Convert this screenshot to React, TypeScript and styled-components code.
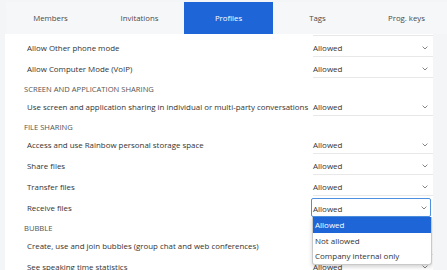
import React from "react";
import styled, { createGlobalStyle } from "styled-components";

const Global = createGlobalStyle`
  html, body {
    margin: 0;
    padding: 0;
    width: 447px;
    height: 270px;
    overflow: hidden;
    background: #f4f5f7;
    font-family: "Open Sans", "Noto Sans", sans-serif;
  }
`;

const Page = styled.div`
  display: flex;
  flex-direction: column;
  width: 447px;
  height: 270px;
  overflow: hidden;
`;

const TabBar = styled.div`
  display: flex;
  margin: 2px 0 0 6px;
  height: 32px;
  background: #f6f7f9;
  flex-shrink: 0;
`;

const Tab = styled.div<{ $active?: boolean }>`
  flex: 0 0 89px;
  display: flex;
  align-items: center;
  justify-content: center;
  font-size: 7.8px;
  color: ${(p) => (p.$active ? "#ffffff" : "#4a4a4a")};
  background: ${(p) => (p.$active ? "#1e66d8" : "transparent")};
`;

const Content = styled.div`
  margin-left: 5px;
  width: 428px;
  flex: 1;
  background: #ffffff;
  overflow: hidden;
`;

const List = styled.div`
  display: flex;
  flex-direction: column;
  margin-top: -19px;
  padding-left: 19px;
`;

const Row = styled.div`
  display: grid;
  grid-template-columns: minmax(0, 1fr) 120px;
  align-items: end;
  height: 21px;
`;

const Label = styled.div`
  padding-left: 3px;
  height: 19px;
  line-height: 20px;
  font-size: 7.9px;
  color: #333333;
  white-space: nowrap;
  overflow: hidden;
`;

const Section = styled.div`
  height: 17px;
  padding-top: 4px;
  box-sizing: border-box;
  line-height: 15px;
  font-size: 7.6px;
  color: #555555;
  text-transform: uppercase;
`;

const SelectWrap = styled.div`
  position: relative;
  height: 19px;
`;

const Select = styled.div<{ $focused?: boolean }>`
  display: flex;
  align-items: center;
  justify-content: space-between;
  height: 19px;
  box-sizing: border-box;
  font-size: 8px;
  color: #333333;
  ${(p) =>
    p.$focused
      ? `
    border: 1px solid #4d8fe0;
    border-radius: 2px;
    margin-left: -2px;
    margin-right: 2px;
    padding: 1px 3px 0 1px;
  `
      : `
    border-bottom: 1px solid #e8e8e8;
    padding: 1px 5px 0 0;
  `}
`;

const Chevron = () => (
  <svg width="6" height="4" viewBox="0 0 6 4">
    <path d="M0.6 0.6 L3 3 L5.4 0.6" fill="none" stroke="#777" strokeWidth="0.9" />
  </svg>
);

const Menu = styled.div`
  position: absolute;
  top: 19px;
  left: -1px;
  width: 118px;
  background: #ffffff;
  border: 1px solid #c9c9c9;
  border-top: none;
  border-radius: 0 0 3px 3px;
  box-shadow: 0 2px 4px rgba(0, 0, 0, 0.18);
  z-index: 2;
`;

const Option = styled.div<{ $selected?: boolean }>`
  height: 15.6px;
  line-height: 15.6px;
  padding-left: 2px;
  font-size: 8px;
  color: ${(p) => (p.$selected ? "#ffffff" : "#333333")};
  background: ${(p) => (p.$selected ? "#1e66d8" : "transparent")};
  white-space: nowrap;
`;

type Item =
  | { kind: "row"; label: string; focused?: boolean }
  | { kind: "section"; label: string };

const items: Item[] = [
  { kind: "row", label: "Allow Office phone mode" },
  { kind: "row", label: "Allow Other phone mode" },
  { kind: "row", label: "Allow Computer Mode (VoIP)" },
  { kind: "section", label: "Screen and application sharing" },
  { kind: "row", label: "Use screen and application sharing in individual or multi-party conversations" },
  { kind: "section", label: "File sharing" },
  { kind: "row", label: "Access and use Rainbow personal storage space" },
  { kind: "row", label: "Share files" },
  { kind: "row", label: "Transfer files" },
  { kind: "row", label: "Receive files", focused: true },
  { kind: "section", label: "Bubble" },
  { kind: "row", label: "Create, use and join bubbles (group chat and web conferences)" },
  { kind: "row", label: "See speaking time statistics" },
];

const tabs = ["Members", "Invitations", "Profiles", "Tags", "Prog. keys"];
const options = ["Allowed", "Not allowed", "Company internal only"];

export default function App() {
  return (
    <Page>
      <Global />
      <TabBar>
        {tabs.map((t) => (
          <Tab key={t} $active={t === "Profiles"}>
            {t}
          </Tab>
        ))}
      </TabBar>
      <Content>
        <List>
          {items.map((it, i) =>
            it.kind === "section" ? (
              <Section key={i}>{it.label}</Section>
            ) : (
              <Row key={i}>
                <Label>{it.label}</Label>
                <SelectWrap>
                  <Select $focused={it.focused}>
                    <span>Allowed</span>
                    <Chevron />
                  </Select>
                  {it.focused && (
                    <Menu>
                      {options.map((o, j) => (
                        <Option key={o} $selected={j === 0}>
                          {o}
                        </Option>
                      ))}
                    </Menu>
                  )}
                </SelectWrap>
              </Row>
            )
          )}
        </List>
      </Content>
    </Page>
  );
}
